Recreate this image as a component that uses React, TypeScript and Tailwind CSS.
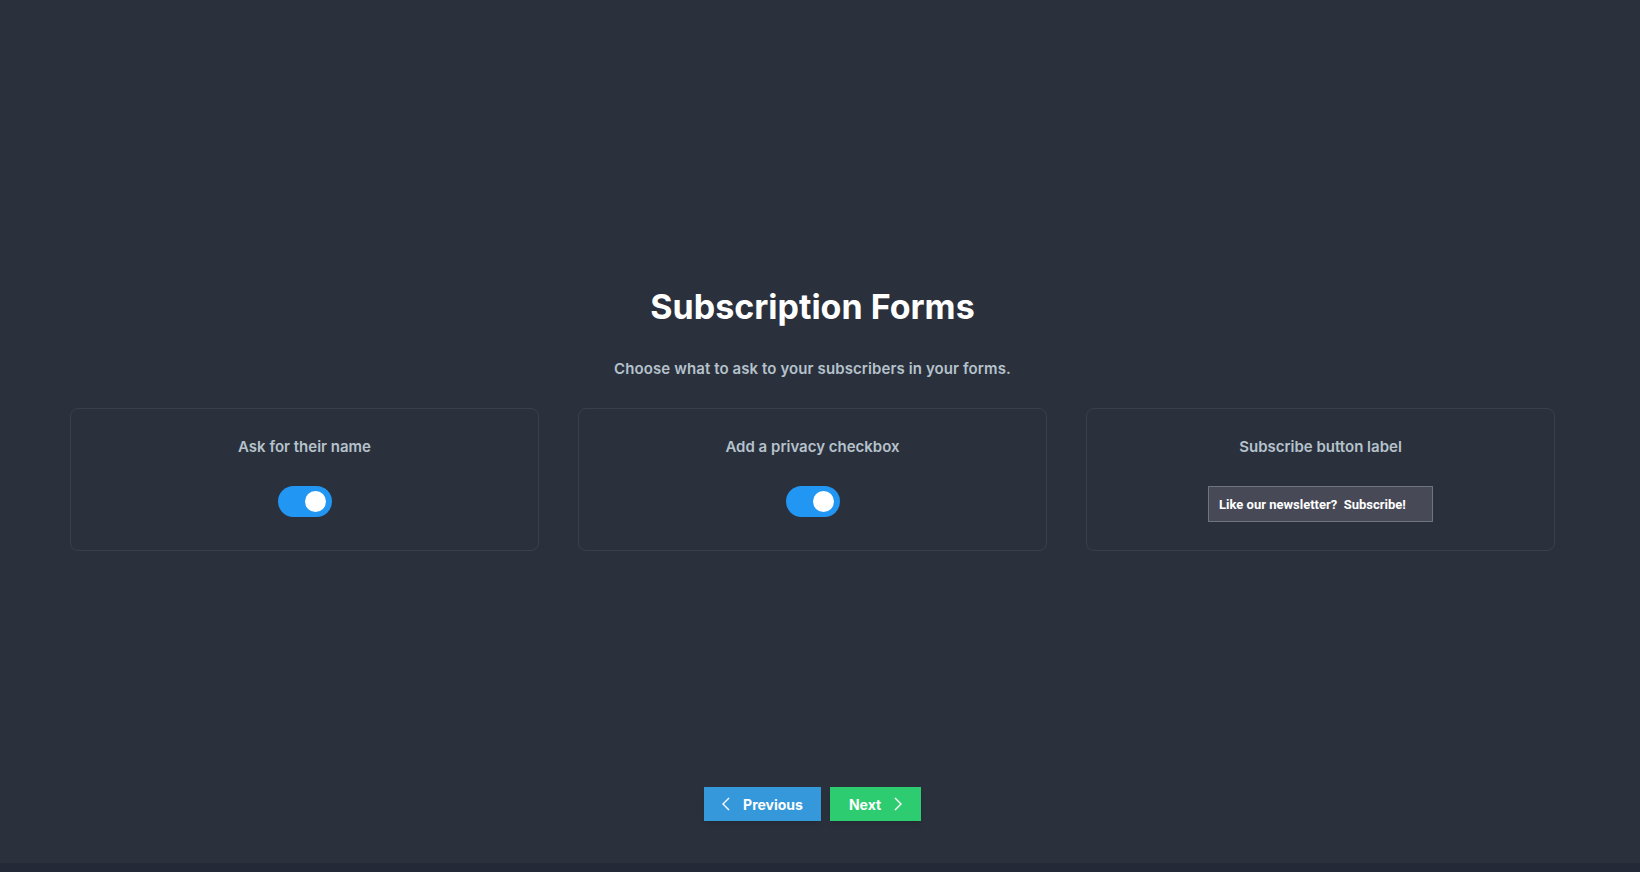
import { useState } from "react"

function Toggle({ on, onChange }: { on: boolean; onChange: () => void }) {
  return (
    <button
      type="button"
      onClick={onChange}
      className={`flex h-[31px] w-[54px] items-center rounded-full px-[6px] ${on ? "justify-end bg-[#2196f3]" : "justify-start bg-[#4a505c]"}`}
    >
      <span className="h-[21px] w-[21px] rounded-full bg-white" />
    </button>
  )
}

function Card({ label, children }: { label: string; children: React.ReactNode }) {
  return (
    <div className="flex h-[143px] flex-col items-center rounded-lg border border-[#3a3f4b] pt-[28px]">
      <div className="text-[15px] font-semibold leading-5 text-[#b5c2cc]">{label}</div>
      <div className="mt-[29px]">{children}</div>
    </div>
  )
}

export default function App() {
  const [askName, setAskName] = useState(true)
  const [privacy, setPrivacy] = useState(true)
  const [buttonLabel, setButtonLabel] = useState("Like our newsletter?  Subscribe!")

  return (
    <div className="flex h-[872px] flex-col bg-[#232936] font-['Inter',sans-serif]">
      <div className="flex h-[863px] flex-col bg-[#2b313c] pr-[15px]">
        <div className="flex flex-col items-center pt-[287px]">
          <h1 className="text-[34px] font-bold leading-10 text-white">Subscription Forms</h1>
          <p className="mt-[32px] text-[15px] font-semibold leading-5 tracking-[0.1px] text-[#b5c2cc]">
            Choose what to ask to your subscribers in your forms.
          </p>
        </div>

        <div className="mt-[29px] grid grid-cols-3 gap-[39px] px-[70px]">
          <Card label="Ask for their name">
            <Toggle on={askName} onChange={() => setAskName(!askName)} />
          </Card>
          <Card label="Add a privacy checkbox">
            <Toggle on={privacy} onChange={() => setPrivacy(!privacy)} />
          </Card>
          <Card label="Subscribe button label">
            <input
              value={buttonLabel}
              onChange={e => setButtonLabel(e.target.value)}
              className="h-[36px] w-[225px] border border-[#6f7482] bg-[#474a56] px-[10px] font-['Roboto',sans-serif] text-[13px] font-bold text-white outline-none"
            />
          </Card>
        </div>

        <div className="mt-[236px] flex justify-center gap-[9px]">
          <button className="flex h-[34px] w-[117px] items-center justify-center gap-[13px] bg-[#3498db] text-[14px] font-bold text-white shadow-md">
            <svg width="8" height="14" viewBox="0 0 8 14" fill="none" stroke="white" strokeWidth="1.4">
              <path d="M7 1 1 7l6 6" />
            </svg>
            Previous
          </button>
          <button className="flex h-[34px] w-[91px] items-center justify-center gap-[13px] bg-[#2ecc71] text-[14px] font-bold text-white shadow-md">
            Next
            <svg width="8" height="14" viewBox="0 0 8 14" fill="none" stroke="white" strokeWidth="1.4">
              <path d="M1 1l6 6-6 6" />
            </svg>
          </button>
        </div>
      </div>
    </div>
  )
}
